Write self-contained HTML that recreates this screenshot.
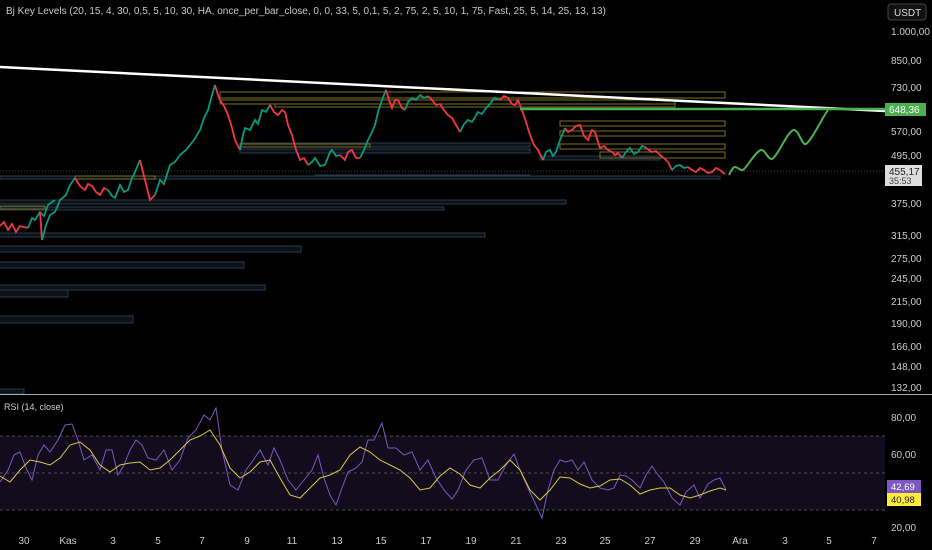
<!DOCTYPE html>
<html><head><meta charset="utf-8"><style>
html,body{margin:0;padding:0;background:#000;width:932px;height:550px;overflow:hidden;font-family:"Liberation Sans",sans-serif}
svg{position:absolute;left:0;top:0}
</style></head><body>
<svg width="932" height="550" viewBox="0 0 932 550" xmlns="http://www.w3.org/2000/svg" font-family="Liberation Sans, sans-serif">
<rect width="932" height="550" fill="#000"/>
<text x="6" y="14" fill="#c8c8c8" font-size="10">Bj Key Levels (20, 15, 4, 30, 0,5, 5, 10, 30, HA, once_per_bar_close, 0, 0, 33, 5, 0,1, 5, 2, 75, 2, 5, 10, 1, 75, Fast, 25, 5, 14, 25, 13, 13)</text>
<rect x="888" y="4" width="38" height="16" rx="3" fill="#111" stroke="#444"/>
<text x="894" y="16" fill="#ddd" font-size="10">USDT</text>
<g fill="#0c1118" stroke="#2a3a4c" stroke-width="1">
<rect x="-1" y="200" width="567" height="4"/>
<rect x="-1" y="207" width="445" height="3"/>
<rect x="-1" y="233" width="486" height="4"/>
<rect x="-1" y="246" width="302" height="6"/>
<rect x="-1" y="262" width="245" height="6"/>
<rect x="-1" y="285" width="266" height="5"/>
<rect x="-1" y="290" width="69" height="7"/>
<rect x="-1" y="316" width="134" height="7"/>
<rect x="-1" y="389" width="25" height="5"/>
<rect x="240" y="143" width="290" height="4"/>
<rect x="240" y="149" width="290" height="4"/>
<rect x="315" y="175" width="215" height="4"/>
<rect x="0" y="176" width="720" height="3"/>
<rect x="540" y="156" width="120" height="4"/>
</g>
<g fill="none" stroke="#7a7020" stroke-width="1">
<rect x="220" y="92" width="505" height="6"/>
<rect x="220" y="100" width="455" height="4"/>
<rect x="275" y="104" width="400" height="3"/>
<rect x="560" y="121" width="165" height="5"/>
<rect x="560" y="131" width="165" height="5"/>
<rect x="560" y="144" width="165" height="5"/>
<rect x="600" y="152" width="125" height="6"/>
<rect x="0" y="206" width="45" height="3"/>
<rect x="75" y="176" width="80" height="3"/>
<rect x="240" y="144" width="130" height="3"/>
</g>
<line x1="0" y1="171" x2="885" y2="171" stroke="#888" stroke-width="0.6" stroke-dasharray="1,2"/>
<g stroke-width="1.8" fill="none">
<polyline stroke="#f23645" points="0,226 4,222 8,230 12,224 16,232 20,226 28,228"/>
<polyline stroke="#089981" points="28,228 32,218 35,220 40,212 44,216 48,205 55,200"/>
<polyline stroke="#f23645" points="40,212 42,240"/>
<polyline stroke="#089981" points="42,240 46,225 50,215 55,212 60,200 66,195 70,185 75,178"/>
<polyline stroke="#f23645" points="75,178 80,186 85,190 88,184 92,186 96,192 100,195 104,188 108,190"/>
<polyline stroke="#089981" points="108,190 112,196 115,198 120,185 124,192 128,190 132,178 135,172 140,160"/>
<polyline stroke="#f23645" points="140,160 143,172 145,180 148,192 150,200 155,195"/>
<polyline stroke="#089981" points="155,195 160,180 164,184 170,165 175,162 180,155 186,150 190,145 194,140 200,130 204,118 208,110 212,95 215,85"/>
<polyline stroke="#f23645" points="215,85 218,95 220,100 224,106 228,115 232,128 235,140 240,150"/>
<polyline stroke="#089981" points="240,150 243,135 245,128 250,130 255,120 258,124 262,110 266,112 270,105"/>
<polyline stroke="#f23645" points="270,105 274,112 278,115 282,110 285,112 288,125 292,135 296,150 300,160 304,158 308,165"/>
<polyline stroke="#089981" points="308,165 312,162 315,158 320,166 325,165 330,152 332,150 336,156 340,155"/>
<polyline stroke="#f23645" points="340,155 345,160 348,152 352,150 356,158 360,158"/>
<polyline stroke="#089981" points="360,158 364,150 368,140 372,132 375,125 378,112 382,100 386,90"/>
<polyline stroke="#f23645" points="386,90 389,100 392,108 395,100 398,100 402,108 405,110"/>
<polyline stroke="#089981" points="405,110 408,102 412,98 416,100 420,95 424,98 428,96"/>
<polyline stroke="#f23645" points="428,96 432,100 436,105 440,104 444,110 448,115 452,118 456,125 460,132"/>
<polyline stroke="#089981" points="460,132 464,124 468,120 472,122 478,112 482,114 486,108 490,104 494,98 500,100"/>
<polyline stroke="#f23645" points="500,100 504,96 508,98 512,104 515,105 518,100 522,110 526,122 530,135 534,145 538,150 543,160"/>
<polyline stroke="#089981" points="543,160 546,152 550,150 553,156 556,152 560,140 565,128"/>
<polyline stroke="#f23645" points="565,128 568,132 572,130 576,126 580,125 584,136 588,140 592,130 595,132"/>
<polyline stroke="#f23645" points="595,132 598,142 600,148 604,146 608,150 612,152 615,155 618,153 622,158"/>
<polyline stroke="#089981" points="622,158 626,152 630,148 634,154 638,152 642,146 645,147"/>
<polyline stroke="#f23645" points="645,147 649,150 652,152 656,151 660,155 664,158 668,162 672,170"/>
<polyline stroke="#089981" points="672,170 676,166 680,165 684,168 688,167"/>
<polyline stroke="#f23645" points="688,167 692,170 696,172 700,168 704,170 708,173 712,172 716,168 720,170 725,174"/>
</g>
<line x1="0" y1="67" x2="885" y2="111" stroke="#fff" stroke-width="2.5"/>
<line x1="520" y1="109" x2="885" y2="109" stroke="#4caf50" stroke-width="2.5"/>
<path d="M729,175 C731,171 733,167 735,167 C738,167 740,171 743,170 C748,166 755,152 761,150 C765,149 768,160 772,159 C778,156 788,130 794,130 C799,130 802,146 806,144 C812,140 822,118 828,110" stroke="#4caf50" stroke-width="2" fill="none"/>
<rect x="885" y="103" width="41" height="13" fill="#4caf50"/>
<text x="889" y="113" fill="#fff" font-size="10">648,36</text>
<rect x="885" y="165" width="37" height="21" fill="#ddd"/>
<text x="889" y="175" fill="#222" font-size="10">455,17</text>
<text x="889" y="184" fill="#444" font-size="9">35:53</text>
<g fill="#ccc" font-size="10">
<text x="891" y="35">1.000,00</text>
<text x="891" y="64">850,00</text>
<text x="891" y="91">730,00</text>
<text x="891" y="135">570,00</text>
<text x="891" y="159">495,00</text>
<text x="891" y="207">375,00</text>
<text x="891" y="239">315,00</text>
<text x="891" y="262">275,00</text>
<text x="891" y="282">245,00</text>
<text x="891" y="305">215,00</text>
<text x="891" y="327">190,00</text>
<text x="891" y="350">166,00</text>
<text x="891" y="370">148,00</text>
<text x="891" y="391">132,00</text>
</g>
<line x1="0" y1="394.5" x2="932" y2="394.5" stroke="#aaa" stroke-width="1"/>
<text x="4" y="410" fill="#ccc" font-size="9">RSI (14, close)</text>
<rect x="0" y="436" width="885" height="74" fill="#120c1c"/>
<g stroke="#666" stroke-dasharray="3,3" stroke-width="0.8">
<line x1="0" y1="436" x2="885" y2="436"/><line x1="0" y1="473" x2="885" y2="473"/><line x1="0" y1="510" x2="885" y2="510"/>
</g>
<polyline fill="none" stroke="#7e57c2" stroke-width="1" points="0,482 8,470 14,455 20,452 26,468 32,480 38,455 44,445 50,452 58,440 65,425 72,424 78,440 84,460 92,455 100,470 106,450 112,450 118,475 124,465 130,450 136,440 142,445 148,458 156,460 164,450 172,470 180,460 188,438 196,430 204,415 210,420 216,408 222,450 230,485 238,490 246,470 252,462 260,450 268,465 274,448 280,460 288,480 296,490 304,480 312,470 318,455 324,478 330,495 336,505 342,488 348,472 356,468 362,462 368,440 374,440 382,423 388,448 396,448 404,455 412,452 420,470 428,460 436,478 444,490 452,499 458,490 466,470 474,460 482,458 490,480 498,480 506,465 514,454 520,470 528,488 536,505 542,518 548,490 554,470 560,460 566,462 572,460 578,470 584,462 592,480 600,488 608,490 614,488 620,475 626,476 632,480 640,488 646,475 652,466 658,475 664,482 672,498 680,505 686,492 694,485 700,498 708,484 714,480 720,478 726,490"/>
<polyline fill="none" stroke="#d8c94a" stroke-width="1" points="0,476 10,482 20,470 30,460 40,462 50,465 60,458 70,445 80,442 90,450 100,465 110,472 120,465 130,463 140,462 150,470 160,468 170,460 180,450 190,440 200,436 210,430 220,445 230,468 240,478 250,472 260,462 270,460 280,478 290,495 300,498 310,488 320,478 330,475 340,470 350,455 360,447 370,452 380,460 390,465 400,470 410,478 420,490 430,488 440,476 450,468 460,474 470,485 480,488 490,478 500,470 510,460 520,470 530,490 540,500 550,490 560,477 570,478 580,484 590,488 600,486 610,480 620,479 630,485 640,494 650,490 660,488 670,488 680,495 690,498 700,495 710,491 720,488 726,490"/>
<rect x="887" y="480" width="34" height="13" fill="#7e57c2"/>
<text x="891" y="490" fill="#fff" font-size="9.5">42,69</text>
<rect x="887" y="493" width="34" height="13" fill="#ffeb3b"/>
<text x="891" y="503" fill="#222" font-size="9.5">40,98</text>
<g fill="#ccc" font-size="10">
<text x="891" y="421">80,00</text>
<text x="891" y="458">60,00</text>
<text x="891" y="531">20,00</text>
</g>
<g fill="#ccc" font-size="10" text-anchor="middle">
<text x="24" y="544">30</text><text x="68" y="544">Kas</text><text x="113" y="544">3</text><text x="158" y="544">5</text><text x="202" y="544">7</text><text x="247" y="544">9</text><text x="292" y="544">11</text><text x="337" y="544">13</text><text x="381" y="544">15</text><text x="426" y="544">17</text><text x="471" y="544">19</text><text x="516" y="544">21</text><text x="561" y="544">23</text><text x="605" y="544">25</text><text x="650" y="544">27</text><text x="695" y="544">29</text><text x="740" y="544">Ara</text><text x="785" y="544">3</text><text x="829" y="544">5</text><text x="874" y="544">7</text>
</g>
</svg>
</body></html>
